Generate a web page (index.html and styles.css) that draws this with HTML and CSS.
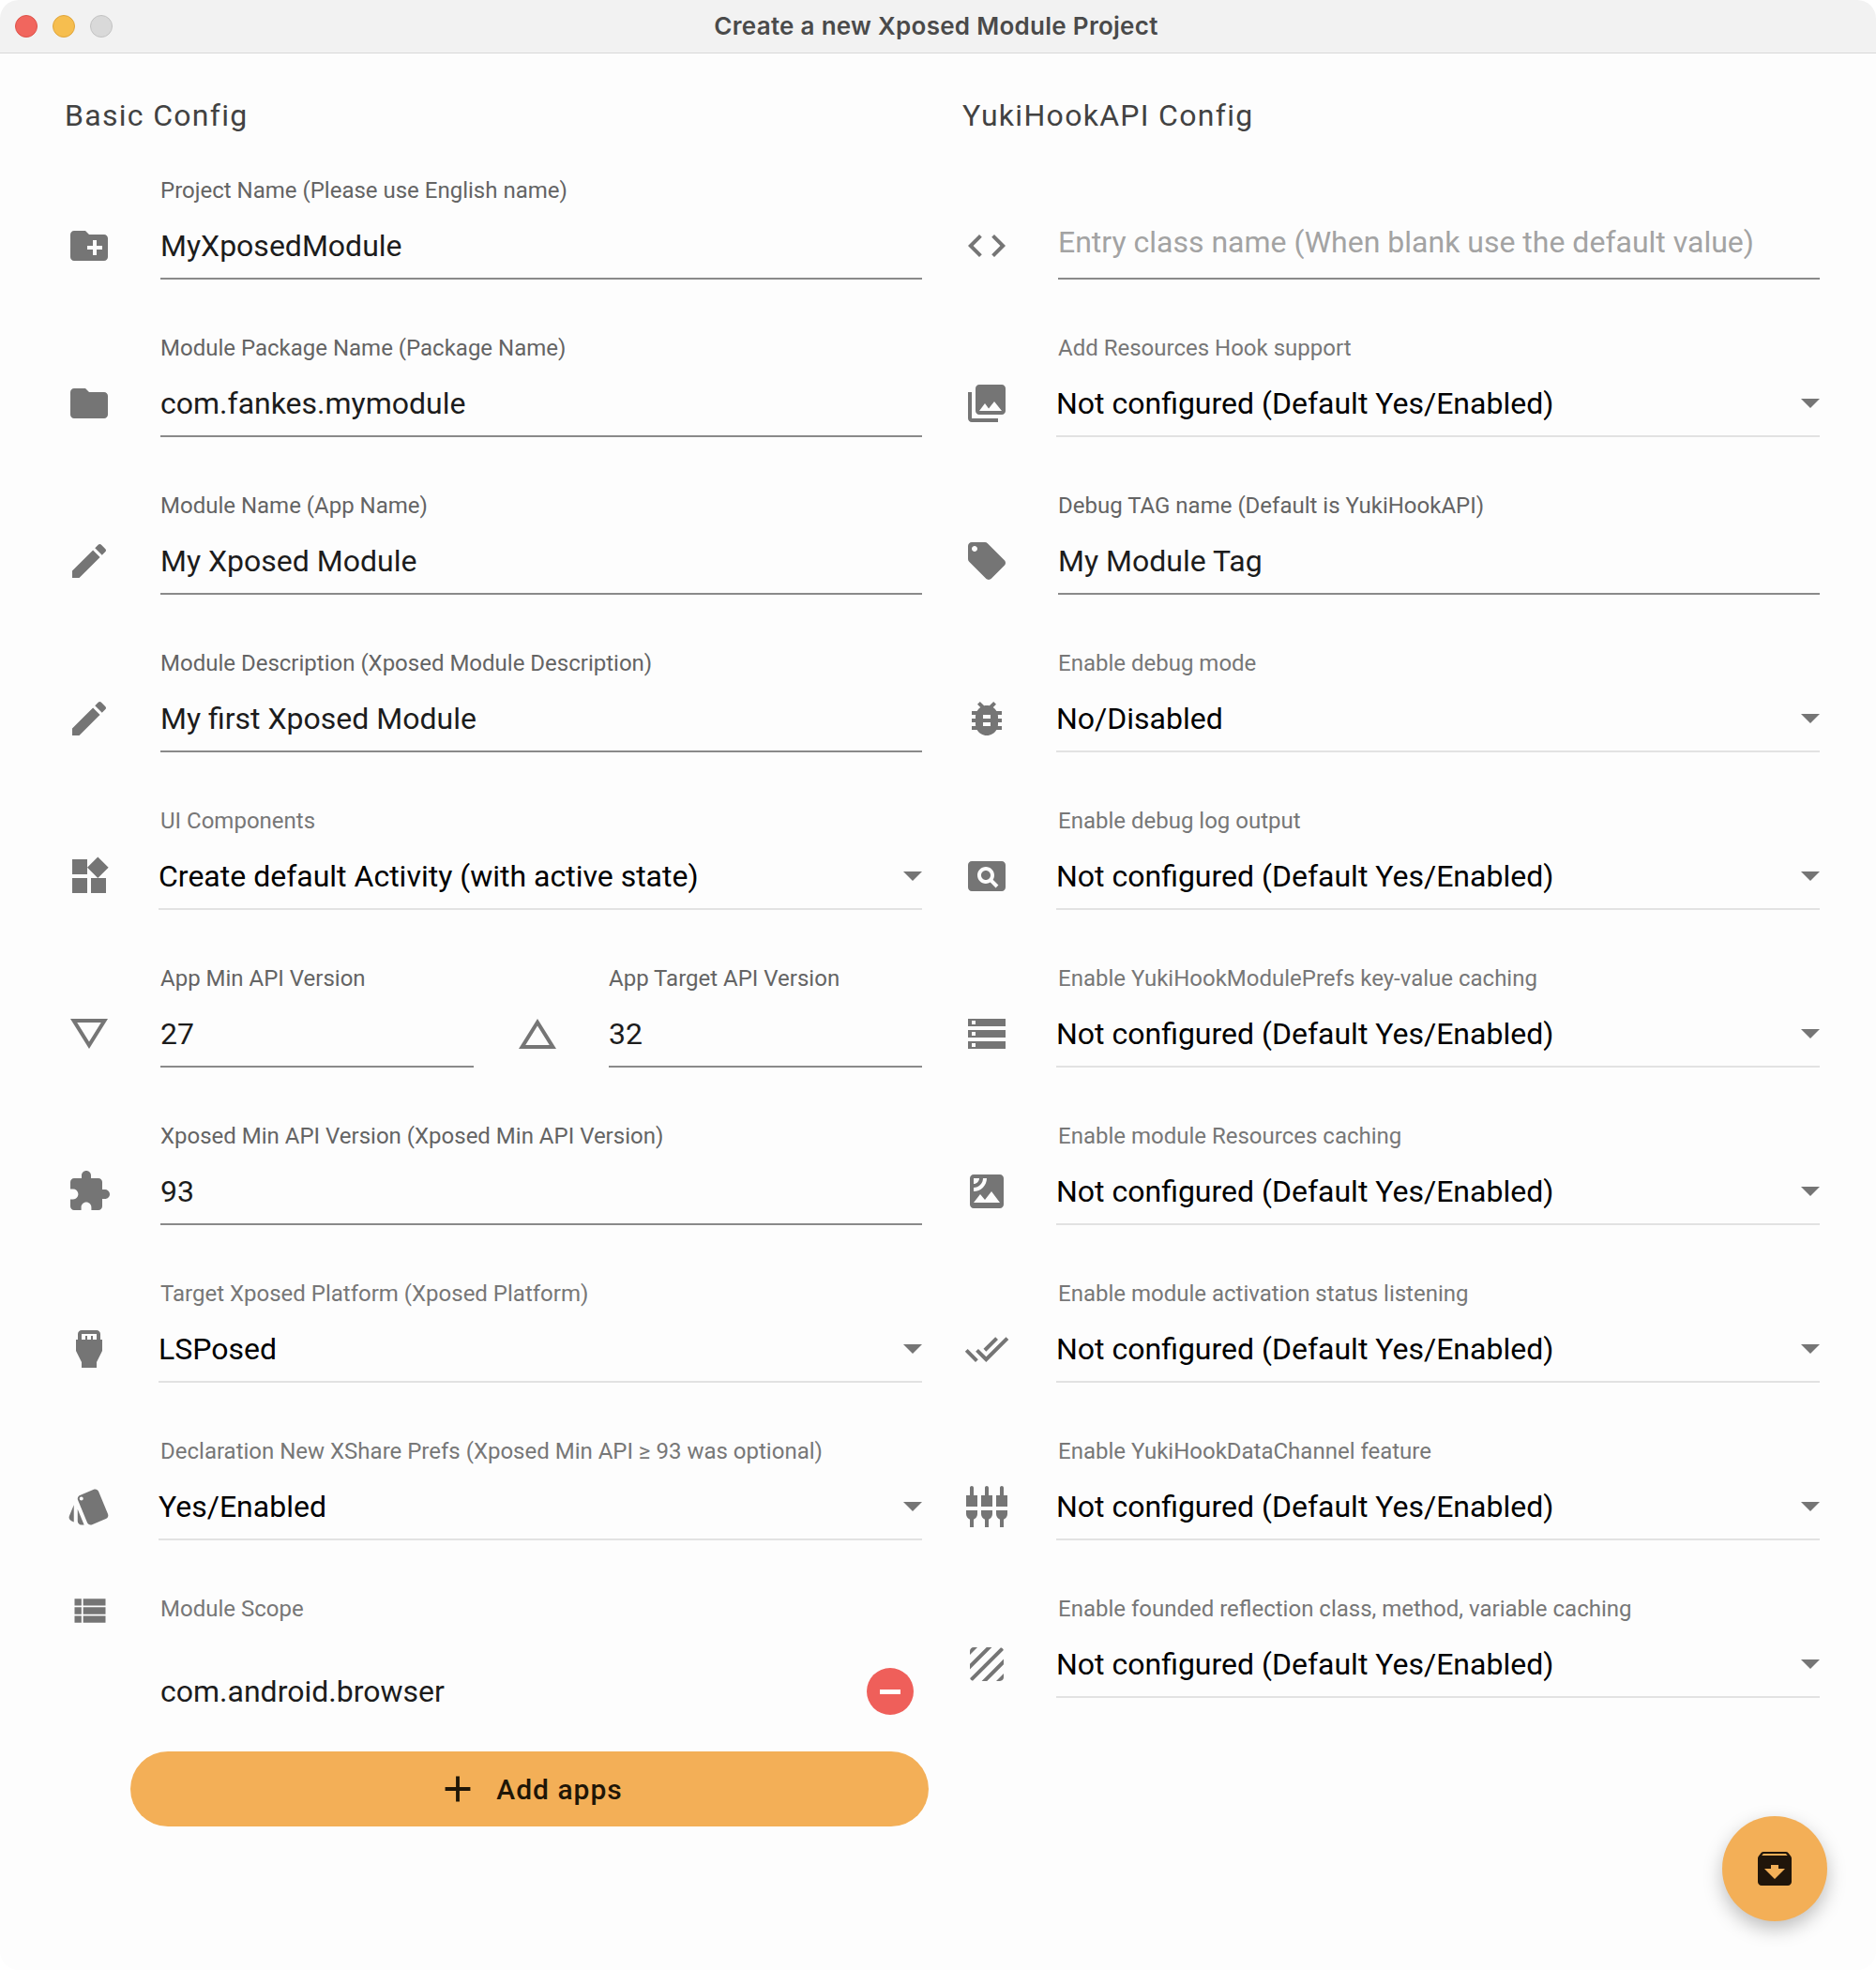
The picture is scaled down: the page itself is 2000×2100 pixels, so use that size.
FILE: index.html
```html
<!DOCTYPE html>
<html lang="en">
<head>
    <meta charset="UTF-8">
    <title>Create a new Xposed Module Project</title>
    <link rel="stylesheet" href="styles.css">
</head>
<body>

<div class="window">
    <div class="titlebar">
        <div class="lights">
            <span class="light red"></span>
            <span class="light yellow"></span>
            <span class="light grey"></span>
        </div>
        <div class="win-title">Create a new Xposed Module Project</div>
    </div>

    <div class="content">
        <!-- Left column -->
        <div class="column">
            <h2 class="heading">Basic Config</h2>

            <div class="row">
                <svg class="icon" viewBox="0 0 24 24"><path d="M20 6h-8l-2-2H4c-1.11 0-1.99.89-1.99 2L2 18c0 1.11.89 2 2 2h16c1.11 0 2-.89 2-2V8c0-1.11-.89-2-2-2zm-1 8h-3v3h-2v-3h-3v-2h3V9h2v3h3v2z"/></svg>
                <div class="field">
                    <div class="label">Project Name (Please use English name)</div>
                    <div class="value">MyXposedModule</div>
                </div>
            </div>

            <div class="row">
                <svg class="icon" viewBox="0 0 24 24"><path d="M10 4H4c-1.1 0-1.99.9-1.99 2L2 18c0 1.1.9 2 2 2h16c1.1 0 2-.9 2-2V8c0-1.1-.9-2-2-2h-8l-2-2z"/></svg>
                <div class="field">
                    <div class="label">Module Package Name (Package Name)</div>
                    <div class="value">com.fankes.mymodule</div>
                </div>
            </div>

            <div class="row">
                <svg class="icon" viewBox="0 0 24 24"><path d="M3 17.25V21h3.75L17.81 9.94l-3.75-3.75L3 17.25zM20.71 7.04c.39-.39.39-1.02 0-1.41l-2.34-2.34c-.39-.39-1.02-.39-1.41 0l-1.83 1.83 3.75 3.75 1.83-1.83z"/></svg>
                <div class="field">
                    <div class="label">Module Name (App Name)</div>
                    <div class="value">My Xposed Module</div>
                </div>
            </div>

            <div class="row">
                <svg class="icon" viewBox="0 0 24 24"><path d="M3 17.25V21h3.75L17.81 9.94l-3.75-3.75L3 17.25zM20.71 7.04c.39-.39.39-1.02 0-1.41l-2.34-2.34c-.39-.39-1.02-.39-1.41 0l-1.83 1.83 3.75 3.75 1.83-1.83z"/></svg>
                <div class="field">
                    <div class="label">Module Description (Xposed Module Description)</div>
                    <div class="value">My first Xposed Module</div>
                </div>
            </div>

            <div class="row">
                <svg class="icon" viewBox="0 0 24 24"><path d="M13 13v8h8v-8h-8zM3 21h8v-8H3v8zM3 3v8h8V3H3zm13.66-1.31L11 7.34 16.66 13l5.66-5.66-5.66-5.65z"/></svg>
                <div class="field">
                    <div class="label">UI Components</div>
                    <div class="value select">Create default Activity (with active state)<svg class="arrow" viewBox="0 0 24 24"><path d="M7 10l5 5 5-5z"/></svg></div>
                </div>
            </div>

            <div class="row">
                <svg class="icon flip" viewBox="0 0 24 24"><path d="M12 7.77L18.39 18H5.61L12 7.77M12 4L2 20h20L12 4z"/></svg>
                <div class="field half">
                    <div class="label">App Min API Version</div>
                    <div class="value">27</div>
                </div>
                <svg class="icon icon-mid" viewBox="0 0 24 24"><path d="M12 7.77L18.39 18H5.61L12 7.77M12 4L2 20h20L12 4z"/></svg>
                <div class="field half">
                    <div class="label">App Target API Version</div>
                    <div class="value">32</div>
                </div>
            </div>

            <div class="row">
                <svg class="icon" viewBox="0 0 24 24"><path d="M20.5 11H19V7c0-1.1-.9-2-2-2h-4V3.5C13 2.12 11.88 1 10.5 1S8 2.12 8 3.5V5H4c-1.1 0-1.99.9-1.99 2v3.8H3.5c1.49 0 2.7 1.21 2.7 2.7s-1.21 2.7-2.7 2.7H2V20c0 1.1.9 2 2 2h3.8v-1.5c0-1.49 1.21-2.7 2.7-2.7 1.49 0 2.7 1.21 2.7 2.7V22H17c1.1 0 2-.9 2-2v-4h1.5c1.38 0 2.5-1.12 2.5-2.5S21.88 11 20.5 11z"/></svg>
                <div class="field">
                    <div class="label">Xposed Min API Version (Xposed Min API Version)</div>
                    <div class="value">93</div>
                </div>
            </div>

            <div class="row">
                <svg class="icon" viewBox="0 0 24 24"><path d="M18 7V4c0-1.1-.9-2-2-2H8c-1.1 0-2 .9-2 2v3H5v6l3 6v3h8v-3l3-6V7h-1zM8 4h8v3h-2.01V5h-1v2H11V5h-1v2H8V4z"/></svg>
                <div class="field">
                    <div class="label">Target Xposed Platform (Xposed Platform)</div>
                    <div class="value select">LSPosed<svg class="arrow" viewBox="0 0 24 24"><path d="M7 10l5 5 5-5z"/></svg></div>
                </div>
            </div>

            <div class="row row-last">
                <svg class="icon" viewBox="0 0 24 24"><path d="M2.53 19.65l1.34.56v-9.03l-2.43 5.86c-.41 1.02.08 2.19 1.09 2.61zm19.5-3.7L17.07 3.98c-.31-.75-1.04-1.21-1.81-1.23-.26 0-.53.04-.79.15L7.1 5.95c-.75.31-1.21 1.03-1.23 1.8-.01.27.04.54.15.8l4.96 11.97c.31.76 1.05 1.22 1.83 1.23.26 0 .52-.05.77-.15l7.36-3.05c1.02-.42 1.51-1.59 1.09-2.6zM7.88 8.75c-.55 0-1-.45-1-1s.45-1 1-1 1 .45 1 1-.45 1-1 1zm-2 11c0 1.1.9 2 2 2h1.45l-3.45-8.34v6.34z"/></svg>
                <div class="field">
                    <div class="label">Declaration New XShare Prefs (Xposed Min API ≥ 93 was optional)</div>
                    <div class="value select">Yes/Enabled<svg class="arrow" viewBox="0 0 24 24"><path d="M7 10l5 5 5-5z"/></svg></div>
                </div>
            </div>

            <div class="scope-head">
                <svg class="icon" viewBox="0 0 24 24"><path d="M3 14h4v-4H3v4zm0 5h4v-4H3v4zM3 9h4V5H3v4zm5 5h13v-4H8v4zm0 5h13v-4H8v4zM8 5v4h13V5H8z"/></svg>
                <div class="label">Module Scope</div>
            </div>
            <div class="scope-item">
                <div class="scope-name">com.android.browser</div>
                <div class="remove"><span></span></div>
            </div>
            <button class="add-btn">
                <svg viewBox="0 0 24 24"><path d="M19 13h-6v6h-2v-6H5v-2h6V5h2v6h6v2z"/></svg>
                Add apps
            </button>
        </div>

        <!-- Right column -->
        <div class="column">
            <h2 class="heading">YukiHookAPI Config</h2>

            <div class="row">
                <svg class="icon" viewBox="0 0 24 24"><path d="M9.4 16.6L4.8 12l4.6-4.6L8 6l-6 6 6 6 1.4-1.4zm5.2 0l4.6-4.6-4.6-4.6L16 6l6 6-6 6-1.4-1.4z"/></svg>
                <div class="field">
                    <div class="label"></div>
                    <div class="value hint">Entry class name (When blank use the default value)</div>
                </div>
            </div>

            <div class="row">
                <svg class="icon" viewBox="0 0 24 24"><path d="M22 16V4c0-1.1-.9-2-2-2H8c-1.1 0-2 .9-2 2v12c0 1.1.9 2 2 2h12c1.1 0 2-.9 2-2zm-11-4l2.03 2.71L16 11l4 5H8l3-4zM2 6v14c0 1.1.9 2 2 2h14v-2H4V6H2z"/></svg>
                <div class="field">
                    <div class="label">Add Resources Hook support</div>
                    <div class="value select">Not configured (Default Yes/Enabled)<svg class="arrow" viewBox="0 0 24 24"><path d="M7 10l5 5 5-5z"/></svg></div>
                </div>
            </div>

            <div class="row">
                <svg class="icon" viewBox="0 0 24 24"><path d="M21.41 11.58l-9-9C12.05 2.22 11.55 2 11 2H4c-1.1 0-2 .9-2 2v7c0 .55.22 1.05.59 1.42l9 9c.36.36.86.58 1.41.58.55 0 1.05-.22 1.41-.59l7-7c.37-.36.59-.86.59-1.41 0-.55-.23-1.06-.59-1.42zM5.5 7C4.67 7 4 6.33 4 5.5S4.67 4 5.5 4 7 4.67 7 5.5 6.33 7 5.5 7z"/></svg>
                <div class="field">
                    <div class="label">Debug TAG name (Default is YukiHookAPI)</div>
                    <div class="value">My Module Tag</div>
                </div>
            </div>

            <div class="row">
                <svg class="icon" viewBox="0 0 24 24"><path d="M20 8h-2.81c-.45-.78-1.07-1.45-1.82-1.96L17 4.41 15.59 3l-2.17 2.17C12.96 5.06 12.49 5 12 5c-.49 0-.96.06-1.41.17L8.41 3 7 4.41l1.62 1.63C7.88 6.55 7.26 7.22 6.81 8H4v2h2.09c-.05.33-.09.66-.09 1v1H4v2h2v1c0 .34.04.67.09 1H4v2h2.81c1.04 1.79 2.97 3 5.19 3s4.15-1.21 5.19-3H20v-2h-2.09c.05-.33.09-.66.09-1v-1h2v-2h-2v-1c0-.34-.04-.67-.09-1H20V8zm-6 8h-4v-2h4v2zm0-4h-4v-2h4v2z"/></svg>
                <div class="field">
                    <div class="label">Enable debug mode</div>
                    <div class="value select">No/Disabled<svg class="arrow" viewBox="0 0 24 24"><path d="M7 10l5 5 5-5z"/></svg></div>
                </div>
            </div>

            <div class="row">
                <svg class="icon" viewBox="0 0 24 24"><path d="M11.5 9C10.12 9 9 10.12 9 11.5s1.12 2.5 2.5 2.5 2.5-1.12 2.5-2.5S12.88 9 11.5 9zM20 4H4c-1.1 0-2 .9-2 2v12c0 1.1.9 2 2 2h16c1.1 0 2-.9 2-2V6c0-1.1-.9-2-2-2zm-3.21 14.21l-2.91-2.91c-.69.44-1.51.7-2.39.7C9.01 16 7 13.99 7 11.5S9.01 7 11.5 7 16 9.01 16 11.5c0 .88-.26 1.69-.7 2.39l2.91 2.9-1.42 1.42z"/></svg>
                <div class="field">
                    <div class="label">Enable debug log output</div>
                    <div class="value select">Not configured (Default Yes/Enabled)<svg class="arrow" viewBox="0 0 24 24"><path d="M7 10l5 5 5-5z"/></svg></div>
                </div>
            </div>

            <div class="row">
                <svg class="icon" viewBox="0 0 24 24"><path d="M2 20h20v-4H2v4zm2-3h2v2H4v-2zM2 4v4h20V4H2zm4 3H4V5h2v2zm-4 7h20v-4H2v4zm2-3h2v2H4v-2z"/></svg>
                <div class="field">
                    <div class="label">Enable YukiHookModulePrefs key-value caching</div>
                    <div class="value select">Not configured (Default Yes/Enabled)<svg class="arrow" viewBox="0 0 24 24"><path d="M7 10l5 5 5-5z"/></svg></div>
                </div>
            </div>

            <div class="row">
                <svg class="icon" viewBox="0 0 24 24"><path d="M19 3H5c-1.1 0-2 .9-2 2v14c0 1.1.9 2 2 2h14c1.1 0 2-.9 2-2V5c0-1.1-.9-2-2-2zM5 4.99h3C8 6.65 6.65 8 5 8V4.99zM5 12v-2c2.76 0 5-2.25 5-5.01h2C12 8.86 8.87 12 5 12zm0 6l3.5-4.5 2.5 3.01L14.5 12l4.5 6H5z"/></svg>
                <div class="field">
                    <div class="label">Enable module Resources caching</div>
                    <div class="value select">Not configured (Default Yes/Enabled)<svg class="arrow" viewBox="0 0 24 24"><path d="M7 10l5 5 5-5z"/></svg></div>
                </div>
            </div>

            <div class="row">
                <svg class="icon" viewBox="0 0 24 24"><path d="M18 7l-1.41-1.41-6.34 6.34 1.41 1.41L18 7zm4.24-1.41L11.66 16.17 7.48 12l-1.41 1.41L11.66 19l12-12-1.42-1.41zM.41 13.41L6 19l1.41-1.41L1.83 12 .41 13.41z"/></svg>
                <div class="field">
                    <div class="label">Enable module activation status listening</div>
                    <div class="value select">Not configured (Default Yes/Enabled)<svg class="arrow" viewBox="0 0 24 24"><path d="M7 10l5 5 5-5z"/></svg></div>
                </div>
            </div>

            <div class="row">
                <svg class="icon" viewBox="0 0 24 24"><path d="M5 2c0-.55-.45-1-1-1s-1 .45-1 1v4H1v6h6V6H5V2zm4 14c0 1.3.84 2.4 2 2.82V23h2v-4.18c1.16-.41 2-1.51 2-2.82v-2H9v2zm-8 0c0 1.3.84 2.4 2 2.82V23h2v-4.18C6.16 18.4 7 17.3 7 16v-2H1v2zM21 6V2c0-.55-.45-1-1-1s-1 .45-1 1v4h-2v6h6V6h-2zm-8-4c0-.55-.45-1-1-1s-1 .45-1 1v4H9v6h6V6h-2V2zm4 14c0 1.3.84 2.4 2 2.82V23h2v-4.18c1.16-.41 2-1.51 2-2.82v-2h-6v2z"/></svg>
                <div class="field">
                    <div class="label">Enable YukiHookDataChannel feature</div>
                    <div class="value select">Not configured (Default Yes/Enabled)<svg class="arrow" viewBox="0 0 24 24"><path d="M7 10l5 5 5-5z"/></svg></div>
                </div>
            </div>

            <div class="row">
                <svg class="icon" viewBox="0 0 24 24"><path d="M19.51 3.08L3.08 19.51c.09.34.27.65.51.9.25.24.56.42.9.51L20.93 4.49c-.19-.69-.73-1.23-1.42-1.41zM11.88 3L3 11.88v2.83L14.71 3h-2.83zM5 3c-1.1 0-2 .9-2 2v2l4-4H5zm14 18c.55 0 1.05-.22 1.41-.59.37-.36.59-.86.59-1.41v-2l-4 4h2zm-9.71 0h2.83L21 12.12V9.29L9.29 21z"/></svg>
                <div class="field">
                    <div class="label">Enable founded reflection class, method, variable caching</div>
                    <div class="value select">Not configured (Default Yes/Enabled)<svg class="arrow" viewBox="0 0 24 24"><path d="M7 10l5 5 5-5z"/></svg></div>
                </div>
            </div>
        </div>
    </div>

    <div class="fab">
        <svg viewBox="0 0 24 24"><path d="M20.54 5.23l-1.39-1.68C18.88 3.21 18.47 3 18 3H6c-.47 0-.88.21-1.16.55L3.46 5.23C3.17 5.57 3 6.02 3 6.5V19c0 1.1.9 2 2 2h14c1.1 0 2-.9 2-2V6.5c0-.48-.17-.93-.46-1.27zM12 17.5L6.5 12H10v-2h4v2h3.5L12 17.5zM5.12 5l.81-1h12l.94 1H5.12z"/></svg>
    </div>
</div>

</body>
</html>
```

FILE: styles.css
```css
html, body {
    margin: 0;
    padding: 0;
    background-color: #fff;
}
body {
    font-family: Roboto, "Liberation Sans", sans-serif;
}
.window {
    position: relative;
    width: 2000px;
    height: 2100px;
    background-color: #fdfdfd;
    border-radius: 20px;
    overflow: hidden;
}
.titlebar {
    position: relative;
    display: flex;
    align-items: center;
    justify-content: center;
    height: 56px;
    background-color: #f2f2f2;
    border-bottom: 1px solid #d8d8d8;
}
.lights {
    position: absolute;
    left: 16px;
    top: 16px;
    display: flex;
    gap: 16px;
}
.light {
    width: 24px;
    height: 24px;
    border-radius: 50%;
    box-sizing: border-box;
}
.light.red {
    background-color: #f1665e;
    border: 1px solid #dd5249;
}
.light.yellow {
    background-color: #f6be4f;
    border: 1px solid #dfa53c;
}
.light.grey {
    background-color: #d9d9d9;
    border: 1px solid #c2c2c2;
}
.win-title {
    font-family: Inter, Roboto, sans-serif;
    font-size: 26px;
    font-weight: 600;
    letter-spacing: 0.28px;
    color: #4a4a4a;
    margin: 0 4px 2px 0;
}
.content {
    display: grid;
    grid-template-columns: 957px 957px;
    padding-left: 69px;
}
.column {
    display: flex;
    flex-direction: column;
}
.heading {
    margin: 0 0 47px;
    padding-top: 50px;
    line-height: 32px;
    font-size: 32px;
    font-weight: 400;
    letter-spacing: 1.3px;
    color: #424242;
}
.row {
    display: flex;
    align-items: flex-end;
    margin-bottom: 56px;
}
.row-last {
    margin-bottom: 51px;
}
.icon {
    width: 48px;
    height: 48px;
    flex-shrink: 0;
    fill: #757575;
    margin: 0 52px 12px 2px;
}
.flip {
    transform: rotate(180deg);
}
.icon-mid {
    margin-left: 44px;
}
.field {
    width: 812px;
}
.field.half {
    width: 334px;
}
.label {
    height: 32px;
    line-height: 32px;
    margin: 1px 0 7px;
    font-size: 24px;
    color: #646464;
}
.field:has(.select) .label,
.scope-head .label {
    color: #777;
}
.value {
    display: flex;
    align-items: center;
    height: 72px;
    box-sizing: border-box;
    padding-top: 2px;
    border-bottom: 2px solid #8a8a8a;
    font-size: 32px;
    color: #1c1c1c;
}
.value.hint {
    align-items: flex-start;
    padding-top: 13px;
    color: #a3a3a3;
}
.value.select {
    justify-content: space-between;
    margin-left: -2px;
    color: #000;
    border-bottom-color: #e2e2e2;
}
.arrow {
    width: 48px;
    height: 48px;
    margin: -2px -14px 0 0;
    fill: #757575;
}
.scope-head {
    display: flex;
    align-items: center;
    height: 48px;
}
.scope-head .icon {
    width: 44px;
    height: 44px;
    margin: 0 53px 0 5px;
}
.scope-head .label {
    margin: 0 0 4px;
}
.scope-item {
    display: flex;
    align-items: center;
    justify-content: space-between;
    width: 812px;
    height: 60px;
    margin: 32px 0 0 102px;
}
.scope-name {
    font-size: 32px;
    color: #1c1c1c;
}
.remove {
    display: flex;
    align-items: center;
    justify-content: center;
    width: 50px;
    height: 50px;
    margin-right: 9px;
    border-radius: 50%;
    background-color: #ef5f5a;
}
.remove span {
    width: 22px;
    height: 5px;
    background-color: #fff;
}
.add-btn {
    display: flex;
    align-items: center;
    justify-content: center;
    gap: 18px;
    width: 851px;
    height: 80px;
    margin: 34px 0 0 70px;
    border: none;
    border-radius: 40px;
    background-color: #f3af57;
    font-family: Roboto, sans-serif;
    font-size: 30px;
    font-weight: 500;
    letter-spacing: 1px;
    color: #1f1607;
}
.add-btn svg {
    width: 46px;
    height: 46px;
    fill: #1f1607;
}
.fab {
    position: absolute;
    left: 1836px;
    top: 1936px;
    display: flex;
    align-items: center;
    justify-content: center;
    width: 112px;
    height: 112px;
    border-radius: 50%;
    background-color: #f3af57;
    box-shadow: 0 8px 20px rgba(0, 0, 0, 0.25);
}
.fab svg {
    width: 48px;
    height: 48px;
    fill: #20150a;
}
```
